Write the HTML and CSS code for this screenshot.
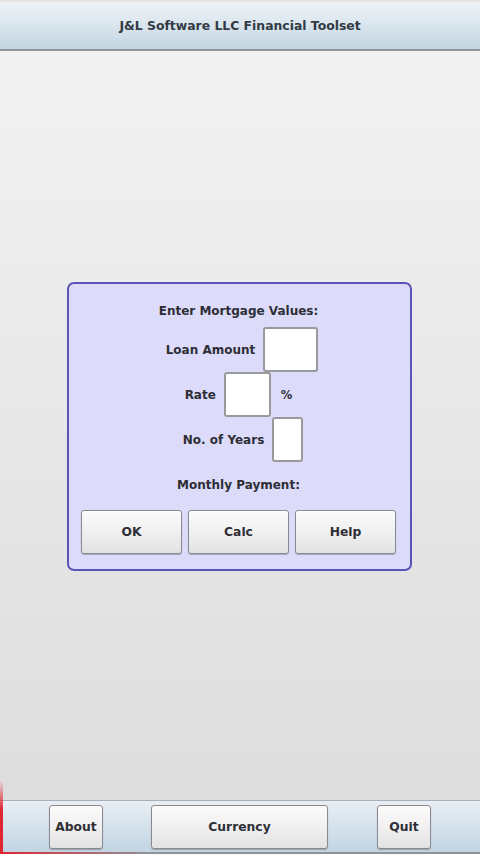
FILE: index.html
```html
<!DOCTYPE html>
<html>
<head>
<meta charset="utf-8">
<link rel="stylesheet" href="styles.css">
</head>
<body>
<div class="app">
  <header class="titlebar">J&amp;L Software LLC Financial Toolset</header>
  <main class="main">
    <section class="panel">
      <div class="heading">Enter Mortgage Values:</div>
      <div class="row r-loan"><span class="label">Loan Amount</span><span class="field f-loan"></span></div>
      <div class="row"><span class="label">Rate</span><span class="field f-rate"></span><span class="pct">%</span></div>
      <div class="row r-years"><span class="label">No. of Years</span><span class="field f-years"></span></div>
      <div class="result">Monthly Payment:</div>
      <div class="btnrow">
        <button class="btn">OK</button>
        <button class="btn">Calc</button>
        <button class="btn">Help</button>
      </div>
    </section>
  </main>
  <footer class="bottombar">
    <button class="btn b-about">About</button>
    <button class="btn b-currency">Currency</button>
    <button class="btn b-quit">Quit</button>
  </footer>
  <div class="edge"></div>
</div>
</body>
</html>
```
FILE: styles.css
```css
* { box-sizing: border-box; }
html, body { margin: 0; padding: 0; }
body {
  font-family: "DejaVu Sans", "Liberation Sans", sans-serif;
  color: #2e2e36;
  width: 480px;
  height: 854px;
  overflow: hidden;
}
.app {
  position: relative;
  height: 854px;
  display: flex;
  flex-direction: column;
  background: linear-gradient(#f3f3f3, #dcdcdc);
}
.titlebar {
  height: 51px;
  flex: none;
  display: flex;
  align-items: center;
  justify-content: center;
  font-size: 12.4px;
  font-weight: bold;
  color: #333a44;
  background: linear-gradient(#eef3f6 0%, #dde8ef 40%, #c3d6e3 100%);
  border-top: 2px solid #e6e6e6;
  border-bottom: 2px solid #8e9398;
}
.main {
  flex: 1;
  display: flex;
  align-items: center;
  justify-content: center;
}
.panel {
  width: 345px;
  background: #dcdcfa;
  border: 2px solid #5a54b4;
  border-radius: 7px;
  padding: 18px 13px 15px 12px;
  display: flex;
  flex-direction: column;
  align-items: center;
  font-size: 12px;
  font-weight: bold;
  margin: 2px 2px 0 0;
}
.heading { line-height: 18px; margin-bottom: 7px; }
.row {
  display: flex;
  align-items: center;
  height: 45px;
}
.r-loan { padding-left: 7px; }
.r-years { padding-left: 9px; }
.label { margin-right: 8px; }
.field {
  display: block;
  height: 45px;
  background: #fff;
  border: 2px solid #9a9a9e;
  border-radius: 3px;
}
.f-loan { width: 55px; }
.f-rate { width: 47px; }
.f-years { width: 31px; }
.pct { margin-left: 10px; font-size: 11.5px; }
.result { line-height: 18px; margin-top: 14px; margin-bottom: 16px; }
.btnrow {
  display: flex;
  gap: 6px;
  width: 100%;
  justify-content: center;
}
.btn {
  font-family: inherit;
  font-size: 12.3px;
  font-weight: bold;
  color: #2e2e36;
  height: 44px;
  padding: 0;
  border: 1px solid #8a8a8e;
  border-radius: 3px;
  background: linear-gradient(#fbfbfb 0%, #f0f0f0 50%, #e2e2e2 100%);
  box-shadow: 0 1px 1px rgba(0,0,0,0.25), inset 0 1px 0 #fff;
}
.btnrow .btn { width: 101px; }
.bottombar {
  height: 54px;
  flex: none;
  display: flex;
  align-items: center;
  padding-left: 49px;
  background: linear-gradient(#e8eff4 0%, #d5e2ec 50%, #c2d5e3 100%);
  border-top: 1px solid #a9b0b6;
  border-bottom: 2px solid #8e9398;
}
.b-about { width: 54px; }
.b-currency { width: 177px; margin-left: 48px; }
.b-quit { width: 54px; margin-left: 49px; }
.edge {
  position: absolute;
  left: 0;
  bottom: 0;
  width: 3px;
  height: 74px;
  background: linear-gradient(rgba(230,40,50,0), #e02632 40%, #e02632);
}
.edge::after {
  content: "";
  position: absolute;
  left: 0;
  bottom: 0;
  width: 150px;
  height: 2px;
  background: linear-gradient(90deg, #e02632, rgba(224,38,50,0));
}
```
